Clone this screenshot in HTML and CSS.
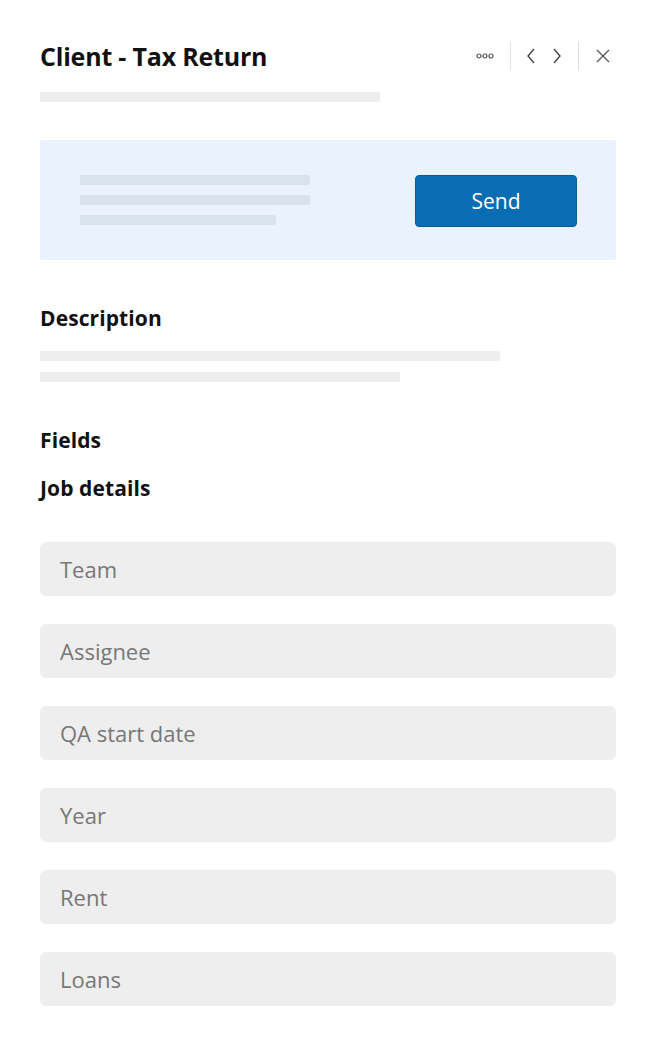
FILE: index.html
```html
<!DOCTYPE html>
<html>
<head>
<meta charset="utf-8">
<link rel="stylesheet" href="styles.css">
</head>
<body>
<div class="panel">
  <header class="header">
    <h1 class="title">Client - Tax Return</h1>
    <div class="actions">
      <span class="icon dots"><svg width="18" height="6" viewBox="0 0 18 6"><circle cx="3" cy="3" r="2" fill="none" stroke="#555" stroke-width="1.2"/><circle cx="9" cy="3" r="2" fill="none" stroke="#555" stroke-width="1.2"/><circle cx="15" cy="3" r="2" fill="none" stroke="#555" stroke-width="1.2"/></svg></span>
      <span class="sep sep1"></span>
      <span class="icon"><svg width="10" height="16" viewBox="0 0 10 16"><path d="M8 1 L2 8 L8 15" fill="none" stroke="#444" stroke-width="1.4"/></svg></span>
      <span class="icon"><svg width="10" height="16" viewBox="0 0 10 16"><path d="M2 1 L8 8 L2 15" fill="none" stroke="#444" stroke-width="1.4"/></svg></span>
      <span class="sep sep2"></span>
      <span class="icon"><svg width="14" height="14" viewBox="0 0 14 14"><path d="M1 1 L13 13 M13 1 L1 13" fill="none" stroke="#555" stroke-width="1.3"/></svg></span>
    </div>
  </header>
  <div class="skel sub"></div>

  <section class="banner">
    <div class="banner-lines">
      <div class="bskel w230"></div>
      <div class="bskel w230"></div>
      <div class="bskel w196"></div>
    </div>
    <button class="send">Send</button>
  </section>

  <h2 class="section">Description</h2>
  <div class="desc">
    <div class="skel w460"></div>
    <div class="skel w360"></div>
  </div>

  <h2 class="section fields">Fields</h2>
  <h2 class="section job">Job details</h2>

  <div class="inputs">
    <div class="input">Team</div>
    <div class="input">Assignee</div>
    <div class="input">QA start date</div>
    <div class="input">Year</div>
    <div class="input">Rent</div>
    <div class="input">Loans</div>
  </div>
</div>
</body>
</html>
```
FILE: styles.css
```css
* { box-sizing: border-box; }
body {
  margin: 0;
  background: #fff;
  font-family: "Open Sans", "Noto Sans", sans-serif;
  color: #111;
}
.panel {
  padding: 36px 40px 0 40px;
}
.header {
  display: flex;
  align-items: center;
  justify-content: space-between;
  height: 40px;
}
.title {
  margin: 0;
  font-size: 25px;
  font-weight: 700;
  letter-spacing: -0.2px;
  color: #111;
}
.actions {
  display: flex;
  align-items: center;
}
.icon {
  display: flex;
  align-items: center;
  justify-content: center;
  width: 26px;
  height: 28px;
}
.dots { width: 28px; }
.sep {
  width: 1px;
  height: 28px;
  background: #e0e0e0;
}
.sep1 { margin: 0 7px 0 11px; }
.sep2 { margin: 0 11px 0 8px; }
.skel {
  height: 10px;
  background: #ededed;
  border-radius: 2px;
}
.sub {
  width: 340px;
  margin-top: 16px;
}
.banner {
  margin-top: 38px;
  height: 120px;
  background: #eaf3fd;
  border-radius: 2px;
  display: flex;
  align-items: center;
  justify-content: space-between;
  padding: 0 39px 0 40px;
}
.banner-lines {
  display: flex;
  flex-direction: column;
  gap: 10px;
}
.bskel {
  height: 10px;
  background: #d8e3ee;
  border-radius: 2px;
}
.w230 { width: 230px; }
.w196 { width: 196px; }
.send {
  width: 162px;
  height: 52px;
  background: #0a6db3;
  border: 1px solid #085d9b;
  border-radius: 4px;
  color: #fff;
  font-family: "Open Sans", "Noto Sans", sans-serif;
  font-size: 21px;
  margin-top: 2px;
}
.section {
  margin: 0;
  font-size: 21px;
  font-weight: 700;
  letter-spacing: 0.1px;
  line-height: 28px;
  color: #111;
}
.banner + .section { margin-top: 44px; }
.desc {
  margin-top: 19px;
  display: flex;
  flex-direction: column;
  gap: 11px;
}
.w460 { width: 460px; }
.w360 { width: 360px; }
.fields { margin-top: 44px; }
.job { margin-top: 20px; }
.inputs {
  margin-top: 40px;
  display: flex;
  flex-direction: column;
  gap: 28px;
}
.input {
  height: 54px;
  background: #eeeeee;
  border-radius: 6px;
  padding-left: 20px;
  display: flex;
  align-items: center;
  font-size: 22px;
  color: #777;
}
```
